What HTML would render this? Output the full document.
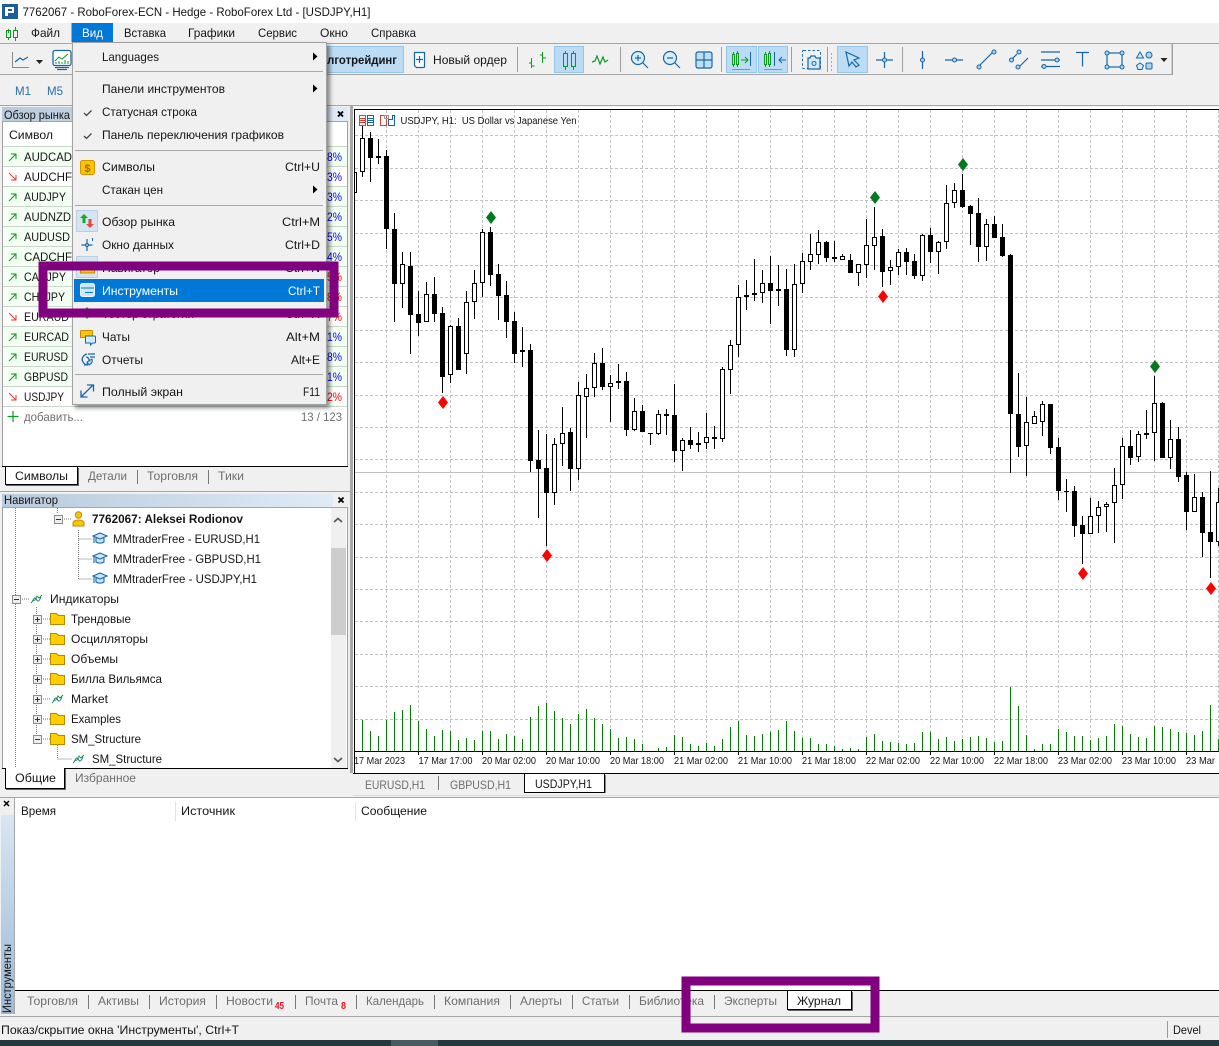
<!DOCTYPE html>
<html lang="ru"><head><meta charset="utf-8"><title>RoboForex MT5</title>
<style>
html,body{margin:0;padding:0;background:#f0f0f0;overflow:hidden}
svg{display:block;position:absolute;left:0;top:0}
text{font-family:"Liberation Sans","Noto Sans CJK JP",sans-serif;font-size:12px;fill:#151515;white-space:pre}
.g{fill:#6e6e6e}.m{fill:#2b2b2b}
.l{stroke:#1767a8;fill:none;stroke-width:1.2}
.c{stroke:#1767a8;fill:#a9d4f2;stroke-width:1}
.a{fill:#bcdcf5;stroke:#92c6ec}
.crisp{shape-rendering:crispEdges}
</style></head>
<body>
<svg width="1219" height="1046" viewBox="0 0 1219 1046" xmlns="http://www.w3.org/2000/svg">
<defs>
<linearGradient id="tb" x1="0" x2="1" y1="0" y2="0"><stop offset="0" stop-color="#b8cadb"/><stop offset="1" stop-color="#dfebf7"/></linearGradient>
<linearGradient id="vb" x1="0" x2="0" y1="1" y2="0"><stop offset="0" stop-color="#9db8d6"/><stop offset="1" stop-color="#d8e6f3"/></linearGradient>
<clipPath id="cc"><rect x="355" y="110" width="864" height="641"/></clipPath>
<filter id="sh" x="-5%" y="-5%" width="112%" height="112%"><feDropShadow dx="3" dy="3" stdDeviation="2" flood-color="#000" flood-opacity=".45"/></filter>
</defs>

<!-- window base -->
<rect width="1219" height="1046" fill="#f0f0f0"/>
<rect width="1219" height="23" fill="#fff"/>
<g><rect x="2" y="4" width="16" height="15" fill="#1c5e9c"/><path d="M5 7h9v6H8v3H5zM8 9v2h4V9z" fill="#fff" fill-rule="evenodd"/></g>
<text x="22.500" y="16" textLength="348" lengthAdjust="spacingAndGlyphs">7762067 - RoboForex-ECN - Hedge - RoboForex Ltd - [USDJPY,H1]</text>

<!-- menu bar -->
<g stroke="#0a9a1e" fill="none"><path d="M8.500 29v4M8.500 37v3M15.500 27v4M15.500 37v4"/><rect x="6.500" y="30.500" width="4" height="7"/><rect x="13.500" y="30.500" width="4" height="7"/></g>
<text x="31" y="37" textLength="29" lengthAdjust="spacingAndGlyphs">Файл</text>
<rect x="71.500" y="23" width="41.500" height="19" fill="#0078d7"/>
<text x="82" y="37" textLength="21" lengthAdjust="spacingAndGlyphs" style="fill:#fff">Вид</text>
<text x="124" y="37" textLength="42" lengthAdjust="spacingAndGlyphs">Вставка</text>
<text x="188" y="37" textLength="47" lengthAdjust="spacingAndGlyphs">Графики</text>
<text x="258" y="37" textLength="39" lengthAdjust="spacingAndGlyphs">Сервис</text>
<text x="320" y="37" textLength="28" lengthAdjust="spacingAndGlyphs">Окно</text>
<text x="371" y="37" textLength="45" lengthAdjust="spacingAndGlyphs">Справка</text>

<!-- toolbars -->
<g class="crisp"><path d="M0 43.500H1219" stroke="#a6a6a6"/><path d="M0 74.500H1172V44" stroke="#a6a6a6" fill="none"/><path d="M1172.500 44V75" stroke="#a0a0a0"/></g>
<path d="M12.500 52V67.500H29" stroke="#8a8a8a" fill="none"/><path d="M15 62l5-4 3 2 5-3" stroke="#1767a8" fill="none" stroke-width="1.200"/>
<path d="M36 60h7l-3.500 4z" fill="#222"/>
<g><rect x="53" y="50.500" width="18" height="15" rx="2" fill="#fff" stroke="#1767a8" stroke-width="1.300"/><path d="M55 61l4-4 3 2 6-5" stroke="#0a9a1e" fill="none"/><path d="M56 64v-2M59 64v-3M62 64v-2M65 64v-4M68 64v-3" stroke="#0a9a1e"/><path d="M55 67.500h14M57 69.500h10" stroke="#1767a8" stroke-width="1.200"/></g>
<rect class="a" x="305.500" y="46.500" width="98" height="26"/>
<text x="319" y="64" textLength="78" lengthAdjust="spacingAndGlyphs" font-weight="700">Алготрейдинг</text>
<path d="M414.500 52.500h10v14a1 1 0 0 1-1 1h-7l-2-2zM419.500 56v7M416 59.500h7" stroke="#1767a8" fill="#fff" stroke-width="1.200"/>
<text x="433" y="64" textLength="74" lengthAdjust="spacingAndGlyphs">Новый ордер</text>
<g stroke="#9e9e9e" class="crisp"><path d="M517.500 47v25M620.500 47v25M721.500 47v25M791.500 47v25M827.500 47v25M902.500 47v25"/></g>
<path d="M531.500 58v10M529 63h3M531.500 66h3M542.500 52v11M540 55h3M543 58h3" stroke="#0a9a1e" fill="none"/>
<rect class="a" x="554.500" y="46.500" width="29" height="26"/>
<g stroke="#0a9a1e" fill="none"><path d="M565.500 51v3M565.500 66v4M573.500 51v3M573.500 66v4"/><rect x="563.500" y="53.500" width="4" height="13"/><rect x="571.500" y="53.500" width="4" height="13"/></g>
<path d="M592 62l3-1 2-5 3 8 3-7 2 5 3-2" stroke="#0a9a1e" fill="none" stroke-width="1.200"/>
<!-- zoom -->
<g class="l"><circle cx="638" cy="58" r="6.500" fill="#d9edfb"/><path d="M643 63l5 5M635 58h6M638 55v6"/><circle cx="670" cy="58" r="6.500" fill="#d9edfb"/><path d="M675 63l5 5M667 58h6"/></g>
<rect x="696" y="52" width="16" height="16" rx="2" fill="#bfe0f7" stroke="#1767a8" stroke-width="1.200"/><path d="M704 52v16M696 60h16" stroke="#1767a8" stroke-width="1.200"/>
<!-- autoscroll -->
<rect class="a" x="726.500" y="46.500" width="30" height="26"/><rect class="a" x="758.500" y="46.500" width="29" height="26"/>
<g stroke="#0a9a1e" fill="none"><rect x="732.500" y="54.500" width="2" height="10"/><rect x="736.500" y="53.500" width="2" height="11"/><path d="M733.500 52v2M733.500 65v2M737.500 51v2M737.500 65v2"/><path d="M741 60h7M745 57l3 3-3 3"/><rect x="764.500" y="54.500" width="2" height="10"/><rect x="768.500" y="53.500" width="2" height="11"/><path d="M765.500 52v2M765.500 65v2M769.500 51v2M769.500 65v2"/></g>
<path d="M750.500 52v14M774.500 52v14" stroke="#1767a8"/><path d="M779 60h7M782 57l-3 3 3 3" stroke="#1767a8" fill="none"/>
<path d="M732 69.500h18M764 69.500h18" stroke="#8f8f8f"/>
<!-- screenshot -->
<rect x="802.500" y="50.500" width="18" height="18" rx="1" fill="none" stroke="#1767a8" stroke-dasharray="2.500 2"/>
<path d="M808 58h2l1-2h4l1 2h4v11h-12z" fill="#d5eaf9" stroke="#1767a8" stroke-width="1.200"/><circle cx="814" cy="63.500" r="2" fill="none" stroke="#1767a8"/>
<path d="M831.500 53v18" stroke="#aaa" stroke-dasharray="2 2"/>
<!-- cursor etc -->
<rect class="a" x="837.500" y="46.500" width="30" height="26"/>
<path d="M846 52l13 6-5 2 5 5-3 2-4-5-3 4z" fill="#bfe0f7" stroke="#1767a8" stroke-width="1.200"/>
<path d="M884.500 52v16M876 60h17" class="l"/><circle cx="884.500" cy="60" r="2" class="c"/>
<path d="M922.500 51v18" class="l"/><circle cx="922.500" cy="60" r="2" class="c"/>
<path d="M945 60h18" class="l"/><circle cx="954.500" cy="60" r="2" class="c"/>
<path d="M979 66l15-15" class="l"/><circle cx="979" cy="67" r="2" class="c"/><circle cx="994" cy="52" r="2" class="c"/>
<path d="M1011 60l6-6M1020 66l8-8" class="l"/><circle cx="1011.500" cy="60" r="2" class="c"/><circle cx="1019" cy="52" r="2" class="c"/><circle cx="1018" cy="67" r="2" class="c"/>
<path d="M1041 52h19M1041 60h19M1041 66.500h19" class="l"/><circle cx="1057" cy="60" r="2" class="c"/><circle cx="1044" cy="66.500" r="2" class="c"/>
<path d="M1076 52.500h13M1082.500 52.500v14" class="l"/>
<rect x="1107" y="53" width="15" height="14" class="l"/><circle cx="1107" cy="53" r="2" class="c"/><circle cx="1122" cy="53" r="2" class="c"/><circle cx="1107" cy="67" r="2" class="c"/><circle cx="1122" cy="67" r="2" class="c"/>
<path d="M1140 52l3.500 6h-7zM1140 63l3.500 2.500-1.500 4h-4l-1.500-4z" fill="#d5eaf9" stroke="#1767a8"/><circle cx="1149" cy="55" r="3" class="c"/><rect x="1146" y="63" width="6" height="6" rx="1" class="c"/>
<path d="M1160.500 58h7l-3.500 4z" fill="#222"/>
<text x="15" y="95" textLength="16" lengthAdjust="spacingAndGlyphs" style="fill:#2a6ea6">M1</text>
<text x="47" y="95" textLength="16" lengthAdjust="spacingAndGlyphs" style="fill:#2a6ea6">M5</text>
<path d="M0 105.500H1219" stroke="#a6a6a6" class="crisp"/>

<!-- chart -->
<g class="crisp">
<rect x="350" y="106" width="3" height="667" fill="#a8a8a8"/>
<rect x="353" y="107" width="866" height="666" fill="#fff"/>
<path d="M354 109.500H1219M354.500 109V773" stroke="#000"/>
<g clip-path="url(#cc)"><path stroke="#c2c2c2" stroke-dasharray="3 2" fill="none" d="M386.500 110V751M418.500 110V751M450.500 110V751M482.500 110V751M514.500 110V751M546.500 110V751M578.500 110V751M610.500 110V751M642.500 110V751M674.500 110V751M706.500 110V751M738.500 110V751M770.500 110V751M802.500 110V751M834.500 110V751M866.500 110V751M898.500 110V751M930.500 110V751M962.500 110V751M994.500 110V751M1026.500 110V751M1058.500 110V751M1090.500 110V751M1122.500 110V751M1154.500 110V751M1186.500 110V751M1218.500 110V751M355 135.500H1219M355 168.500H1219M355 200.500H1219M355 233.500H1219M355 265.500H1219M355 297.500H1219M355 330.500H1219M355 362.500H1219M355 395.500H1219M355 427.500H1219M355 459.500H1219M355 492.500H1219M355 524.500H1219M355 557.500H1219M355 589.500H1219M355 621.500H1219M355 654.500H1219M355 686.500H1219M355 719.500H1219"/>
<path d="M355 472.500H1219" stroke="#c0c0c0"/>
<!-- volumes -->
<path stroke="#008000" fill="none" d="M362.500 720V751M370.500 731V751M378.500 736V751M386.500 720V751M394.500 712V751M402.500 710V751M410.500 705V751M418.500 721V751M426.500 729V751M434.500 736V751M442.500 730V751M450.500 731V751M458.500 740V751M466.500 738V751M474.500 740V751M482.500 731V751M490.500 731V751M498.500 739V751M506.500 734V751M514.500 736V751M522.500 739V751M530.500 717V751M538.500 706V751M546.500 703V751M554.500 711V751M562.500 718V751M570.500 724V751M578.500 714V751M586.500 709V751M594.500 718V751M602.500 724V751M610.500 729V751M618.500 738V751M626.500 737V751M634.500 739V751M642.500 744V751M658.500 748V751M666.500 747V751M674.500 735V751M682.500 737V751M690.500 744V751M698.500 746V751M706.500 743V751M714.500 746V751M722.500 739V751M730.500 727V751M738.500 721V751M746.500 735V751M754.500 736V751M762.500 734V751M770.500 732V751M778.500 730V751M786.500 721V751M794.500 731V751M802.500 738V751M810.500 738V751M818.500 744V751M826.500 744V751M834.500 746V751M842.500 749V751M850.500 748V751M858.500 749V751M866.500 737V751M874.500 734V751M882.500 741V751M890.500 742V751M898.500 743V751M906.500 744V751M914.500 743V751M922.500 732V751M930.500 732V751M938.500 739V751M946.500 737V751M954.500 741V751M962.500 739V751M970.500 737V751M978.500 736V751M986.500 738V751M994.500 742V751M1002.500 741V751M1010.500 687V751M1018.500 706V751M1026.500 735V751M1034.500 749V751M1042.500 744V751M1050.500 744V751M1058.500 729V751M1066.500 732V751M1074.500 736V751M1082.500 736V751M1090.500 740V751M1098.500 738V751M1106.500 736V751M1114.500 724V751M1122.500 726V751M1130.500 734V751M1138.500 737V751M1146.500 738V751M1154.500 726V751M1162.500 727V751M1170.500 729V751M1178.500 732V751M1186.500 733V751M1194.500 735V751M1202.500 731V751M1210.500 705V751M1218.500 739V751"/>
<!-- wicks -->
<path stroke="#000" fill="none" d="M362.500 125V177M370.500 132V182M378.500 139V164M386.500 150V249M394.500 213V322M402.500 252V308M410.500 252V354M418.500 291V336M426.500 282V322M434.500 277V322M442.500 307V393M450.500 325V383M458.500 318V370M466.500 291V374M474.500 270V319M482.500 229V297M490.500 227V286M498.500 264V320M506.500 281V338M514.500 312V363M522.500 327V367M530.500 344V472M538.500 430V518M546.500 434V546M554.500 438V505M562.500 407V466M570.500 428V491M578.500 382V480M586.500 374V438M594.500 353V397M602.500 348V390M610.500 375V422M618.500 364V389M626.500 372V436M634.500 398V431M642.500 405V432M650.500 433V445M658.500 410V435M666.500 409V435M674.500 384V462M682.500 438V471M690.500 427V449M698.500 432V452M706.500 413V449M714.500 426V449M722.500 367V442M730.500 340V394M738.500 285V357M746.500 280V310M754.500 259V301M762.500 270V303M770.500 256V324M778.500 265V306M786.500 269V356M794.500 264V357M802.500 253V293M810.500 234V270M818.500 230V264M826.500 241V262M834.500 241V262M842.500 254V260M850.500 254V273M858.500 264V286M866.500 219V278M874.500 207V270M882.500 229V287M890.500 260V285M898.500 249V275M906.500 248V275M914.500 254V279M922.500 234V281M930.500 228V263M938.500 241V274M946.500 185V249M954.500 183V208M962.500 174V208M970.500 205V245M978.500 198V262M986.500 219V261M994.500 216V238M1002.500 224V257M1010.500 254V473M1018.500 373V457M1026.500 397V476M1034.500 411V424M1042.500 401V436M1050.500 404V454M1058.500 438V500M1066.500 479V512M1074.500 486V537M1082.500 516V564M1090.500 498V534M1098.500 501V533M1106.500 502V532M1114.500 468V543M1122.500 438V499M1130.500 430V465M1138.500 431V462M1146.500 410V439M1154.500 376V461M1162.500 402V458M1170.500 420V469M1178.500 427V482M1186.500 472V530M1194.500 474V512M1202.500 492V557M1210.500 471V578M1218.500 488V546"/>
<!-- hollow bodies -->
<path stroke="#000" fill="#fff" d="M352.500 172.500h4V192.500h-4zM360.500 138.500h4V171.500h-4zM400.500 264.500h4V283.500h-4zM424.500 294.500h4V321.500h-4zM448.500 326.500h4V374.500h-4zM464.500 302.500h4V353.500h-4zM472.500 283.500h4V301.500h-4zM480.500 232.500h4V282.500h-4zM520.500 350.500h4V351.500h-4zM552.500 444.500h4V492.500h-4zM560.500 433.500h4V443.500h-4zM576.500 395.500h4V468.500h-4zM584.500 388.500h4V396.500h-4zM592.500 363.500h4V387.500h-4zM608.500 383.500h4V386.500h-4zM632.500 411.500h4V429.500h-4zM656.500 414.500h4V433.500h-4zM680.500 440.500h4V450.500h-4zM704.500 437.500h4V442.500h-4zM720.500 369.500h4V438.500h-4zM728.500 345.500h4V369.500h-4zM736.500 297.500h4V344.500h-4zM744.500 295.500h4V296.500h-4zM752.500 293.500h4V294.500h-4zM760.500 283.500h4V292.500h-4zM792.500 284.500h4V349.500h-4zM800.500 261.500h4V283.500h-4zM808.500 254.500h4V261.500h-4zM816.500 242.500h4V254.500h-4zM832.500 257.500h4V258.500h-4zM840.500 256.500h4V259.500h-4zM856.500 264.500h4V272.500h-4zM864.500 245.500h4V264.500h-4zM872.500 237.500h4V245.500h-4zM888.500 267.500h4V270.500h-4zM896.500 252.500h4V266.500h-4zM920.500 235.500h4V275.500h-4zM936.500 242.500h4V251.500h-4zM944.500 203.500h4V241.500h-4zM952.500 190.500h4V202.500h-4zM984.500 224.500h4V246.500h-4zM1024.500 422.500h4V445.500h-4zM1032.500 416.500h4V423.500h-4zM1040.500 404.500h4V421.500h-4zM1088.500 516.500h4V533.500h-4zM1096.500 507.500h4V515.500h-4zM1104.500 504.500h4V506.500h-4zM1112.500 485.500h4V502.500h-4zM1120.500 446.500h4V484.500h-4zM1136.500 434.500h4V456.500h-4zM1152.500 403.500h4V432.500h-4zM1168.500 439.500h4V457.500h-4zM1192.500 497.500h4V511.500h-4zM1216.500 502.500h4V541.500h-4z"/>
<!-- filled bodies -->
<path fill="#000" d="M368 138h5V158h-5zM376 156h5V158h-5zM384 156h5V229h-5zM392 229h5V284h-5zM408 266h5V315h-5zM416 314h5V323h-5zM432 294h5V314h-5zM440 313h5V377h-5zM456 326h5V370h-5zM488 232h5V275h-5zM496 274h5V296h-5zM504 295h5V322h-5zM512 321h5V354h-5zM528 350h5V461h-5zM536 460h5V469h-5zM544 468h5V493h-5zM568 432h5V469h-5zM600 363h5V387h-5zM616 381h5V383h-5zM624 381h5V430h-5zM640 411h5V432h-5zM648 433h5V434h-5zM664 414h5V416h-5zM672 415h5V451h-5zM688 440h5V445h-5zM696 443h5V445h-5zM712 437h5V439h-5zM768 283h5V291h-5zM776 289h5V291h-5zM784 289h5V350h-5zM824 242h5V258h-5zM848 260h5V273h-5zM880 236h5V272h-5zM904 252h5V262h-5zM912 261h5V276h-5zM928 235h5V252h-5zM960 190h5V207h-5zM968 206h5V214h-5zM976 213h5V247h-5zM992 224h5V238h-5zM1000 237h5V256h-5zM1008 255h5V414h-5zM1016 414h5V447h-5zM1048 404h5V448h-5zM1056 447h5V491h-5zM1064 491h5V492h-5zM1072 491h5V526h-5zM1080 525h5V534h-5zM1128 446h5V458h-5zM1144 433h5V435h-5zM1160 403h5V458h-5zM1176 439h5V477h-5zM1184 475h5V512h-5zM1200 497h5V533h-5zM1208 532h5V542h-5z"/>
</g>
<path d="M354 751.500H1219M418.500 751v4M482.500 751v4M546.500 751v4M610.500 751v4M674.500 751v4M738.500 751v4M802.500 751v4M866.500 751v4M930.500 751v4M994.500 751v4M1058.500 751v4M1122.500 751v4M1186.500 751v4" stroke="#000"/>
</g>
<!-- diamonds -->
<g fill="#007a1c"><path d="M491 211l5 6.500-5 6.500-5-6.500z"/><path d="M875 191l5 6.500-5 6.500-5-6.500z"/><path d="M963 158l5 6.500-5 6.500-5-6.500z"/><path d="M1155 360l5 6.500-5 6.500-5-6.500z"/></g>
<g fill="#f00"><path d="M443 396l5 6.500-5 6.500-5-6.500z"/><path d="M883 290l5 6.500-5 6.500-5-6.500z"/><path d="M547 549l5 6.500-5 6.500-5-6.500z"/><path d="M1083 567l5 6.500-5 6.500-5-6.500z"/><path d="M1211 582l5 6.500-5 6.500-5-6.500z"/></g>
<!-- chart label -->
<g fill="none" stroke-width="1"><rect x="359.500" y="115.500" width="6" height="10" stroke="#e03c31"/><path d="M360 118.500h5M360 120.500h5M360 122.500h5" stroke="#e03c31"/><rect x="367.500" y="115.500" width="6" height="10" stroke="#1767a8"/><path d="M368 118.500h5M368 120.500h5M368 122.500h5" stroke="#1767a8"/><path d="M380.500 115.500h6v10h-6z" stroke="#e03c31"/><path d="M388.500 125.500h6v-10h-2v4h-4z" stroke="#1767a8"/><rect x="384.500" y="115.500" width="4" height="3" stroke="#999"/></g>
<text x="400.500" y="124" textLength="176" lengthAdjust="spacingAndGlyphs" style="font-size:10px">USDJPY, H1:  US Dollar vs Japanese Yen</text>
<!-- time axis -->
<text x="354" y="764" textLength="51" lengthAdjust="spacingAndGlyphs" style="font-size:10px">17 Mar 2023</text>
<text x="418.500" y="764" textLength="54" lengthAdjust="spacingAndGlyphs" style="font-size:10px">17 Mar 17:00</text>
<text x="482" y="764" textLength="54" lengthAdjust="spacingAndGlyphs" style="font-size:10px">20 Mar 02:00</text>
<text x="546" y="764" textLength="54" lengthAdjust="spacingAndGlyphs" style="font-size:10px">20 Mar 10:00</text>
<text x="610" y="764" textLength="54" lengthAdjust="spacingAndGlyphs" style="font-size:10px">20 Mar 18:00</text>
<text x="674" y="764" textLength="54" lengthAdjust="spacingAndGlyphs" style="font-size:10px">21 Mar 02:00</text>
<text x="738" y="764" textLength="54" lengthAdjust="spacingAndGlyphs" style="font-size:10px">21 Mar 10:00</text>
<text x="802" y="764" textLength="54" lengthAdjust="spacingAndGlyphs" style="font-size:10px">21 Mar 18:00</text>
<text x="866" y="764" textLength="54" lengthAdjust="spacingAndGlyphs" style="font-size:10px">22 Mar 02:00</text>
<text x="930" y="764" textLength="54" lengthAdjust="spacingAndGlyphs" style="font-size:10px">22 Mar 10:00</text>
<text x="994" y="764" textLength="54" lengthAdjust="spacingAndGlyphs" style="font-size:10px">22 Mar 18:00</text>
<text x="1058" y="764" textLength="54" lengthAdjust="spacingAndGlyphs" style="font-size:10px">23 Mar 02:00</text>
<text x="1122" y="764" textLength="54" lengthAdjust="spacingAndGlyphs" style="font-size:10px">23 Mar 10:00</text>
<text x="1186" y="764" textLength="29" lengthAdjust="spacingAndGlyphs" style="font-size:10px">23 Mar</text>
<!-- chart tabs -->
<g class="crisp"><rect x="353" y="774" width="866" height="21" fill="#f0f0f0"/><path d="M353 773.500H1219" stroke="#000"/><path d="M524.500 774V792.500H604.500V774" fill="#fff" stroke="#000"/><path d="M605.500 775v18" stroke="#888"/><path d="M438.500 776v14" stroke="#777"/><path d="M0 797.500H1219" stroke="#a6a6a6"/><path d="M353 795.500H1219" stroke="#dcdcdc"/></g>
<text x="365" y="789" textLength="60" lengthAdjust="spacingAndGlyphs" class="g">EURUSD,H1</text>
<text x="450" y="789" textLength="61" lengthAdjust="spacingAndGlyphs" class="g">GBPUSD,H1</text>
<text x="535" y="788" textLength="57" lengthAdjust="spacingAndGlyphs">USDJPY,H1</text>

<!-- market watch -->
<g class="crisp">
<rect x="2" y="107" width="346" height="14" fill="url(#tb)"/>
<path d="M2.500 121V467" stroke="#a0a0a0"/><path d="M347.500 121V467" stroke="#a0a0a0"/>
<rect x="3" y="122" width="344" height="345" fill="#fff"/>
<path d="M3 121.500H347" stroke="#a6a6a6"/>
<rect x="3" y="147" width="344" height="20" fill="#f3fff3"/><rect x="3" y="187" width="344" height="20" fill="#f3fff3"/><rect x="3" y="207" width="344" height="20" fill="#f3fff3"/><rect x="3" y="227" width="344" height="20" fill="#f3fff3"/><rect x="3" y="247" width="344" height="20" fill="#f3fff3"/><rect x="3" y="267" width="344" height="20" fill="#f3fff3"/><rect x="3" y="287" width="344" height="20" fill="#f3fff3"/><rect x="3" y="327" width="344" height="20" fill="#f3fff3"/><rect x="3" y="347" width="344" height="20" fill="#f3fff3"/><rect x="3" y="367" width="344" height="20" fill="#f3fff3"/>
<path stroke="#c9d6c9" d="M3 146.500H347M3 166.500H347M3 186.500H347M3 206.500H347M3 226.500H347M3 246.500H347M3 266.500H347M3 286.500H347M3 306.500H347M3 326.500H347M3 346.500H347M3 366.500H347M3 386.500H347M3 406.500H347"/>
</g>
<text x="4" y="119" textLength="66" lengthAdjust="spacingAndGlyphs">Обзор рынка</text>
<path d="M338 111.500l5 5M343 111.500l-5 5" stroke="#000" stroke-width="1.800"/>
<text x="9" y="139" textLength="44" lengthAdjust="spacingAndGlyphs">Символ</text>
<g stroke-width="1" fill="none">
<path d="M9 161l7-7M11 154h5v5M9 201l7-7M11 194h5v5M9 221l7-7M11 214h5v5M9 241l7-7M11 234h5v5M9 261l7-7M11 254h5v5M9 281l7-7M11 274h5v5M9 301l7-7M11 294h5v5M9 341l7-7M11 334h5v5M9 361l7-7M11 354h5v5M9 381l7-7M11 374h5v5" stroke="#0a9a1e"/>
<path d="M9 173l7 7M11 180h5v-5M9 313l7 7M11 320h5v-5M9 393l7 7M11 400h5v-5" stroke="#e03c31"/>
</g>
<text x="24" y="161" textLength="48" lengthAdjust="spacingAndGlyphs">AUDCAD</text><text x="24" y="181" textLength="48" lengthAdjust="spacingAndGlyphs">AUDCHF</text><text x="24" y="201" textLength="42" lengthAdjust="spacingAndGlyphs">AUDJPY</text><text x="24" y="221" textLength="47" lengthAdjust="spacingAndGlyphs">AUDNZD</text><text x="24" y="241" textLength="46" lengthAdjust="spacingAndGlyphs">AUDUSD</text><text x="24" y="261" textLength="48" lengthAdjust="spacingAndGlyphs">CADCHF</text><text x="24" y="281" textLength="42" lengthAdjust="spacingAndGlyphs">CADJPY</text><text x="24" y="301" textLength="41" lengthAdjust="spacingAndGlyphs">CHFJPY</text><text x="24" y="321" textLength="45" lengthAdjust="spacingAndGlyphs">EURAUD</text><text x="24" y="341" textLength="45" lengthAdjust="spacingAndGlyphs">EURCAD</text><text x="24" y="361" textLength="44" lengthAdjust="spacingAndGlyphs">EURUSD</text><text x="24" y="381" textLength="44" lengthAdjust="spacingAndGlyphs">GBPUSD</text><text x="24" y="401" textLength="40" lengthAdjust="spacingAndGlyphs">USDJPY</text>
<text x="327" y="161" textLength="15" lengthAdjust="spacingAndGlyphs" style="fill:#0000e6">8%</text><text x="327" y="181" textLength="15" lengthAdjust="spacingAndGlyphs" style="fill:#0000e6">3%</text><text x="327" y="201" textLength="15" lengthAdjust="spacingAndGlyphs" style="fill:#0000e6">3%</text><text x="327" y="221" textLength="15" lengthAdjust="spacingAndGlyphs" style="fill:#0000e6">2%</text><text x="327" y="241" textLength="15" lengthAdjust="spacingAndGlyphs" style="fill:#0000e6">5%</text><text x="327" y="261" textLength="15" lengthAdjust="spacingAndGlyphs" style="fill:#0000e6">4%</text>
<text x="327" y="341" textLength="15" lengthAdjust="spacingAndGlyphs" style="fill:#0000e6">1%</text><text x="327" y="361" textLength="15" lengthAdjust="spacingAndGlyphs" style="fill:#0000e6">8%</text><text x="327" y="381" textLength="15" lengthAdjust="spacingAndGlyphs" style="fill:#0000e6">1%</text>
<text x="327" y="281" textLength="15" lengthAdjust="spacingAndGlyphs" style="fill:#f00">5%</text><text x="327" y="301" textLength="15" lengthAdjust="spacingAndGlyphs" style="fill:#f00">8%</text><text x="327" y="321" textLength="15" lengthAdjust="spacingAndGlyphs" style="fill:#f00">7%</text><text x="327" y="401" textLength="15" lengthAdjust="spacingAndGlyphs" style="fill:#f00">2%</text>
<path d="M13 411v11M7.500 416.500h11" stroke="#0a9a1e" stroke-width="1.200"/>
<text x="24" y="421" textLength="59" lengthAdjust="spacingAndGlyphs" class="g">добавить...</text>
<text x="301" y="421" textLength="41" lengthAdjust="spacingAndGlyphs" class="g">13 / 123</text>
<g class="crisp"><rect x="3" y="467" width="344" height="19" fill="#f0f0f0"/><path d="M2 466.500H348" stroke="#000"/><path d="M5.500 467V484.500H77.500V467" fill="#fff" stroke="#000"/><path d="M78.500 468V485.500H6" fill="none" stroke="#666"/><path d="M137.500 470v14M208.500 470v14" stroke="#777"/><path d="M0 491.500H350" stroke="#a6a6a6"/></g>
<text x="15" y="480" textLength="53" lengthAdjust="spacingAndGlyphs">Символы</text>
<text x="88" y="480" textLength="39" lengthAdjust="spacingAndGlyphs" class="g">Детали</text>
<text x="147" y="480" textLength="51" lengthAdjust="spacingAndGlyphs" class="g">Торговля</text>
<text x="218" y="480" textLength="26" lengthAdjust="spacingAndGlyphs" class="g">Тики</text>

<!-- navigator -->
<g class="crisp"><rect x="2" y="494" width="331" height="13" fill="url(#tb)"/><path d="M2.500 507V768M347.500 507V768" stroke="#a0a0a0"/><rect x="3" y="508" width="344" height="260" fill="#fff"/><path d="M3 507.500H347" stroke="#a6a6a6"/>
<rect x="331" y="508" width="15" height="260" fill="#f0f0f0"/><rect x="331" y="548" width="15" height="87" fill="#cdcdcd"/></g>
<path d="M334 522l4-3.500 4 3.500M334 758l4 3.500 4-3.500" stroke="#555" stroke-width="1.600" fill="none"/>
<text x="4" y="504" textLength="54" lengthAdjust="spacingAndGlyphs">Навигатор</text>
<path d="M338.500 497.500l5 5M343.500 497.500l-5 5" stroke="#000" stroke-width="1.800"/>
<g stroke="#777" stroke-dasharray="1 1" fill="none" class="crisp"><path d="M15.500 508V768M57.500 508V514M78.500 530V579H92M78.500 539H92M78.500 559H92M36.500 607V745M57.500 745V759H72M20 599H30M41 619H50M41 639H50M41 659H50M41 679H50M41 699H50M41 719H50M41 739H50M62 519H72"/></g>
<g class="crisp" fill="#eee" stroke="#8b8b8b"><rect x="54.500" y="515.500" width="8" height="8"/><rect x="12.500" y="595.500" width="8" height="8"/><rect x="33.500" y="615.500" width="8" height="8"/><rect x="33.500" y="635.500" width="8" height="8"/><rect x="33.500" y="655.500" width="8" height="8"/><rect x="33.500" y="675.500" width="8" height="8"/><rect x="33.500" y="695.500" width="8" height="8"/><rect x="33.500" y="715.500" width="8" height="8"/><rect x="33.500" y="735.500" width="8" height="8"/></g>
<path stroke="#333" class="crisp" d="M56 519.500h5M14 599.500h5M35 739.500h5M35 619.500h5M37.500 617v5M35 639.500h5M37.500 637v5M35 659.500h5M37.500 657v5M35 679.500h5M37.500 677v5M35 699.500h5M37.500 697v5M35 719.500h5M37.500 717v5"/>
<circle cx="78.500" cy="515" r="3.200" fill="#f7c600" stroke="#c78a00"/><path d="M73 526v-3c0-2 3-3 5.500-3s5.500 1 5.500 3v3z" fill="#f7c600" stroke="#c78a00"/>
<text x="92" y="523" textLength="151" lengthAdjust="spacingAndGlyphs" font-weight="700">7762067: Aleksei Rodionov</text>
<g fill="#cfe6f9" stroke="#1767a8" stroke-width="1.100"><path d="M93 536l7-3 7 3-7 3zM96 538v4c2 1.500 6 1.500 8 0v-4M94 537v6"/><path d="M93 556l7-3 7 3-7 3zM96 558v4c2 1.500 6 1.500 8 0v-4M94 557v6"/><path d="M93 576l7-3 7 3-7 3zM96 578v4c2 1.500 6 1.500 8 0v-4M94 577v6"/></g>
<text x="113" y="543" textLength="147" lengthAdjust="spacingAndGlyphs">MMtraderFree - EURUSD,H1</text>
<text x="113" y="563" textLength="148" lengthAdjust="spacingAndGlyphs">MMtraderFree - GBPUSD,H1</text>
<text x="113" y="583" textLength="144" lengthAdjust="spacingAndGlyphs">MMtraderFree - USDJPY,H1</text>
<g stroke-width=".9" fill="none"><path d="M31 603c2-1 2-5 4-5s1 3 3 3 2-3 3-4" stroke="#1767a8"/><path d="M32 601l3-1 2-4 2 2 3-3" stroke="#0a9a1e"/><path d="M52 703c2-1 2-5 4-5s1 3 3 3 2-3 3-4" stroke="#1767a8"/><path d="M53 701l3-1 2-4 2 2 3-3" stroke="#0a9a1e"/><path d="M73 763c2-1 2-5 4-5s1 3 3 3 2-3 3-4" stroke="#1767a8"/><path d="M74 761l3-1 2-4 2 2 3-3" stroke="#0a9a1e"/></g>
<text x="50" y="603" textLength="69" lengthAdjust="spacingAndGlyphs">Индикаторы</text>
<g fill="#ffd000" stroke="#bc8700" class="crisp">
<path d="M50.500 613.500h6l2 2h6v9h-14z"/><path d="M50.500 633.500h6l2 2h6v9h-14z"/><path d="M50.500 653.500h6l2 2h6v9h-14z"/><path d="M50.500 673.500h6l2 2h6v9h-14z"/><path d="M50.500 713.500h6l2 2h6v9h-14z"/><path d="M50.500 733.500h6l2 2h6v9h-14z"/></g>
<text x="71" y="623" textLength="60" lengthAdjust="spacingAndGlyphs">Трендовые</text>
<text x="71" y="643" textLength="77" lengthAdjust="spacingAndGlyphs">Осцилляторы</text>
<text x="71" y="663" textLength="47" lengthAdjust="spacingAndGlyphs">Объемы</text>
<text x="71" y="683" textLength="91" lengthAdjust="spacingAndGlyphs">Билла Вильямса</text>
<text x="71" y="703" textLength="37" lengthAdjust="spacingAndGlyphs">Market</text>
<text x="71" y="723" textLength="50" lengthAdjust="spacingAndGlyphs">Examples</text>
<text x="71" y="743" textLength="70" lengthAdjust="spacingAndGlyphs">SM_Structure</text>
<text x="92" y="763" textLength="70" lengthAdjust="spacingAndGlyphs">SM_Structure</text>
<g class="crisp"><rect x="3" y="769" width="344" height="20" fill="#f0f0f0"/><path d="M2 768.500H348" stroke="#000"/><path d="M5.500 768V788.500H64.500V768" fill="#fff" stroke="#000"/><path d="M65.500 769V789.500H6" fill="none" stroke="#666"/></g>
<text x="15" y="782" textLength="41" lengthAdjust="spacingAndGlyphs">Общие</text>
<text x="75" y="782" textLength="61" lengthAdjust="spacingAndGlyphs" class="g">Избранное</text>

<!-- toolbox -->
<g class="crisp">
<rect x="14" y="798" width="1205" height="193" fill="#fff"/>
<rect x="1" y="815" width="13" height="199" fill="url(#vb)"/>
<path d="M14.500 798V1014" stroke="#a6a6a6"/>
<path d="M175.500 802v19M355.500 802v19" stroke="#e2e2e2"/>
<path d="M15 990.500H1219" stroke="#000"/>
<rect x="15" y="991" width="1204" height="23" fill="#f0f0f0"/>
<path d="M0 1016.500H1219" stroke="#a6a6a6"/>
<path stroke="#777" d="M88.500 995v14M149.500 995v14M216.500 995v14M295.500 995v14M356.500 995v14M434.500 995v14M510.500 995v14M572.500 995v14M629.500 995v14M714.500 995v14"/>
<path d="M787.500 991V1009.500H851.500V991" fill="#fff" stroke="#000"/>
<path d="M852.500 992V1010.500H788" fill="none" stroke="#666"/>
<path d="M1167.500 1021v17" stroke="#9a9a9a"/>
<rect x="0" y="1040" width="1219" height="6" fill="#25373f"/>
<rect x="391" y="1040" width="47" height="6" fill="#4a5a62"/>
</g>
<path d="M4 801l5 5M9 801l-5 5" stroke="#000" stroke-width="1.500"/>
<text x="21" y="815" textLength="35" lengthAdjust="spacingAndGlyphs">Время</text>
<text x="181" y="815" textLength="54" lengthAdjust="spacingAndGlyphs">Источник</text>
<text x="361" y="815" textLength="66" lengthAdjust="spacingAndGlyphs">Сообщение</text>
<text transform="translate(11 1013) rotate(-90)" textLength="69" lengthAdjust="spacingAndGlyphs" x="0" y="0">Инструменты</text>
<text x="27" y="1005" textLength="51" lengthAdjust="spacingAndGlyphs" class="g">Торговля</text>
<text x="98" y="1005" textLength="41" lengthAdjust="spacingAndGlyphs" class="g">Активы</text>
<text x="159" y="1005" textLength="47" lengthAdjust="spacingAndGlyphs" class="g">История</text>
<text x="226" y="1005" textLength="47" lengthAdjust="spacingAndGlyphs" class="g">Новости</text>
<text x="275" y="1009" textLength="9" lengthAdjust="spacingAndGlyphs" style="font-size:10px;fill:#e8141c;font-weight:700">45</text>
<text x="305" y="1005" textLength="33" lengthAdjust="spacingAndGlyphs" class="g">Почта</text>
<text x="341" y="1009" textLength="5" lengthAdjust="spacingAndGlyphs" style="font-size:10px;fill:#e8141c;font-weight:700">8</text>
<text x="366" y="1005" textLength="58" lengthAdjust="spacingAndGlyphs" class="g">Календарь</text>
<text x="444" y="1005" textLength="56" lengthAdjust="spacingAndGlyphs" class="g">Компания</text>
<text x="520" y="1005" textLength="42" lengthAdjust="spacingAndGlyphs" class="g">Алерты</text>
<text x="582" y="1005" textLength="37" lengthAdjust="spacingAndGlyphs" class="g">Статьи</text>
<text x="639" y="1005" textLength="65" lengthAdjust="spacingAndGlyphs" class="g">Библиотека</text>
<text x="724" y="1005" textLength="53" lengthAdjust="spacingAndGlyphs" class="g">Эксперты</text>
<text x="797" y="1005" textLength="44" lengthAdjust="spacingAndGlyphs">Журнал</text>
<text x="1" y="1034" textLength="238" lengthAdjust="spacingAndGlyphs">Показ/скрытие окна 'Инструменты', Ctrl+T</text>
<text x="1173" y="1034" textLength="28" lengthAdjust="spacingAndGlyphs">Devel</text>

<!-- dropdown menu -->
<rect x="72.500" y="42.500" width="254" height="362" fill="#f0f0f0" stroke="#a0a0a0" filter="url(#sh)"/>
<g class="crisp" stroke="#a8a8a8"><path d="M75 71.500H323M75 150.500H323M75 205.500H323M75 374.500H323"/></g>
<text x="102" y="61" textLength="57" lengthAdjust="spacingAndGlyphs">Languages</text>
<path d="M313 52.500l4.500 4-4.500 4z" fill="#000"/>
<text x="102" y="93" textLength="123" lengthAdjust="spacingAndGlyphs">Панели инструментов</text>
<path d="M313 84.500l4.500 4-4.500 4z" fill="#000"/>
<path d="M84 113l2.500 2.500 5-5M84 136l2.500 2.500 5-5" stroke="#444" stroke-width="1.300" fill="none"/>
<text x="102" y="116" textLength="95" lengthAdjust="spacingAndGlyphs">Статусная строка</text>
<text x="102" y="139" textLength="182" lengthAdjust="spacingAndGlyphs">Панель переключения графиков</text>
<rect x="80.500" y="160.500" width="14" height="14" rx="2" fill="#fdc400" stroke="#d19200"/><text x="84.500" y="172" textLength="6" lengthAdjust="spacingAndGlyphs" style="font-size:11px;fill:#a86a00;font-weight:700">$</text>
<text x="102" y="171" textLength="53" lengthAdjust="spacingAndGlyphs">Символы</text><text x="285" y="171" textLength="35" lengthAdjust="spacingAndGlyphs">Ctrl+U</text>
<text x="102" y="194" textLength="61" lengthAdjust="spacingAndGlyphs">Стакан цен</text>
<path d="M313 185.500l4.500 4-4.500 4z" fill="#000"/>
<rect x="76.500" y="210.500" width="21" height="21" fill="#d6e4f2" stroke="#b9cfe4"/>
<path d="M84 214l-4 4h2.500v5h3v-5H88z" fill="#0fae2c"/><path d="M90 228l4-4h-2.500v-5h-3v5H86z" fill="#e44a44"/>
<text x="102" y="226" textLength="73" lengthAdjust="spacingAndGlyphs">Обзор рынка</text><text x="282" y="226" textLength="38" lengthAdjust="spacingAndGlyphs">Ctrl+M</text>
<path d="M87 239v12M81.500 245h11" stroke="#1767a8" stroke-width="1.200"/><circle cx="87" cy="245" r="1.500" class="c"/><path d="M92.500 238v3" stroke="#1767a8"/>
<text x="102" y="249" textLength="72" lengthAdjust="spacingAndGlyphs">Окно данных</text><text x="285" y="249" textLength="35" lengthAdjust="spacingAndGlyphs">Ctrl+D</text>
<rect x="76.500" y="256.500" width="21" height="21" fill="#d6e4f2" stroke="#b9cfe4"/>
<path d="M80.500 268h14v5h-14z" fill="#fdc400" stroke="#c78a00"/>
<text x="102" y="272" textLength="58" lengthAdjust="spacingAndGlyphs">Навигатор</text><text x="285" y="272" textLength="35" lengthAdjust="spacingAndGlyphs">Ctrl+N</text>
<rect x="74" y="279" width="250" height="23" fill="#0078d7" class="crisp"/>
<rect x="80.500" y="283.500" width="14" height="13" rx="2" fill="#cfe6f9" stroke="#e9f4fd"/><path d="M81 288h13M85 292.500h8" stroke="#0078d7"/>
<text x="102" y="295" textLength="76" lengthAdjust="spacingAndGlyphs" style="fill:#fff">Инструменты</text><text x="288" y="295" textLength="32" lengthAdjust="spacingAndGlyphs" style="fill:#fff">Ctrl+T</text>
<path d="M87 308l-5 5 5 5 5-5z" fill="#d8f5d8" stroke="#0fae2c" stroke-width="1.500"/>
<text x="102" y="318" textLength="92" lengthAdjust="spacingAndGlyphs">Тестер стратегий</text><text x="285" y="318" textLength="35" lengthAdjust="spacingAndGlyphs">Ctrl+R</text>
<path d="M80.500 331.500a1 1 0 0 1 1-1h10a1 1 0 0 1 1 1v6h-12z" fill="#fdc400" stroke="#c78a00"/>
<path d="M85.500 336h9a1 1 0 0 1 1 1v5a1 1 0 0 1-1 1h-2l-2 2v-2h-5z" fill="#d5eaf9" stroke="#1767a8"/>
<text x="102" y="341" textLength="28" lengthAdjust="spacingAndGlyphs">Чаты</text><text x="286" y="341" textLength="34" lengthAdjust="spacingAndGlyphs">Alt+M</text>
<path d="M87 354c-4 1-6 5-4 8 1 2 3 3 5 3M84 365c3 0 5-2 5-5 0-2-2-3-3-3M88 354h7M90 357h5" stroke="#1767a8" fill="none" stroke-width="1.300"/><path d="M87 362l5-3c1 3-1 5-3 6z" fill="#a9d4f2" stroke="#1767a8"/>
<text x="102" y="364" textLength="41" lengthAdjust="spacingAndGlyphs">Отчеты</text><text x="291" y="364" textLength="29" lengthAdjust="spacingAndGlyphs">Alt+E</text>
<path d="M81 397l12-12M87 385h6.500v6.500M81 390.500v6.500h6.500" stroke="#1767a8" stroke-width="1.300" fill="none"/>
<text x="102" y="396" textLength="81" lengthAdjust="spacingAndGlyphs">Полный экран</text><text x="303" y="396" textLength="17" lengthAdjust="spacingAndGlyphs">F11</text>

<!-- purple annotation frames -->
<rect x="43" y="266" width="291" height="47" fill="none" stroke="#800080" stroke-width="9" class="crisp"/>
<rect x="686" y="981" width="189" height="47" fill="none" stroke="#800080" stroke-width="9" class="crisp"/>
</svg>
</body></html>
